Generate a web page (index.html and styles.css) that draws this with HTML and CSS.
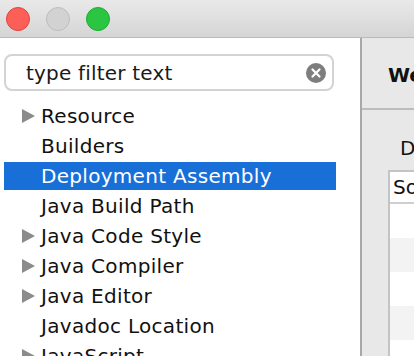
FILE: index.html
```html
<!DOCTYPE html>
<html lang="en">
<head>
    <meta charset="UTF-8">
    <title>Properties</title>
    <link rel="stylesheet" href="styles.css">
</head>
<body>
    <div class="titlebar">
        <span class="light red"></span>
        <span class="light gray"></span>
        <span class="light green"></span>
    </div>
    <div class="main">
        <div class="sidebar">
            <div class="search">
                <span class="search-text">type filter text</span>
                <svg class="clear" width="20" height="20" viewBox="0 0 20 20">
                    <circle cx="10" cy="10" r="10" fill="#7e7e7e"/>
                    <path d="M6.5 6.5 L13.5 13.5 M13.5 6.5 L6.5 13.5" stroke="#fff" stroke-width="2.2" stroke-linecap="round"/>
                </svg>
            </div>
            <ul class="tree">
                <li class="node has-children">Resource</li>
                <li class="node">Builders</li>
                <li class="node selected">Deployment Assembly</li>
                <li class="node">Java Build Path</li>
                <li class="node has-children">Java Code Style</li>
                <li class="node has-children">Java Compiler</li>
                <li class="node has-children">Java Editor</li>
                <li class="node">Javadoc Location</li>
                <li class="node has-children">JavaScript</li>
            </ul>
        </div>
        <div class="pane">
            <div class="pane-header">Web Deployment Assembly</div>
            <div class="pane-body">
                <div class="pane-desc">Define packaging structure for this Java EE Web Application project.</div>
                <div class="table">
                    <div class="table-head">Source</div>
                    <div class="table-row"></div>
                    <div class="table-row alt"></div>
                    <div class="table-row"></div>
                    <div class="table-row alt"></div>
                    <div class="table-row"></div>
                </div>
            </div>
        </div>
    </div>
</body>
</html>
```

FILE: styles.css
```css
html, body {
    margin: 0;
    height: 100%;
    overflow: hidden;
}
body {
    display: flex;
    flex-direction: column;
    font-family: 'DejaVu Sans', sans-serif;
    font-size: 20px;
    color: #111;
    background-color: #fff;
}
.titlebar {
    height: 37px;
    flex-shrink: 0;
    display: flex;
    align-items: center;
    gap: 16px;
    padding-left: 6px;
    background: linear-gradient(#e9e9e9, #d5d5d5);
    border-bottom: 1px solid #b9b9b9;
}
.light {
    width: 24px;
    height: 24px;
    border-radius: 50%;
    box-sizing: border-box;
}
.red {
    background-color: #fc5f57;
    border: 1px solid #e0443e;
}
.gray {
    background-color: #d2d2d2;
    border: 1px solid #bdbdbd;
}
.green {
    background-color: #2ac641;
    border: 1px solid #1eaa35;
}
.main {
    flex: 1;
    display: flex;
    min-height: 0;
}
.sidebar {
    width: 360px;
    flex-shrink: 0;
    border-right: 2px solid #a8a8a8;
    background-color: #fff;
    padding-top: 16px;
}
.search {
    margin-left: 4px;
    width: 330px;
    height: 37px;
    box-sizing: border-box;
    border: 2px solid #d3d3d3;
    border-radius: 8px;
    display: flex;
    align-items: center;
    justify-content: space-between;
    padding: 0 6px 0 20px;
}
.search-text {
    color: #1a1a1a;
    letter-spacing: 0.2px;
}
.tree {
    list-style: none;
    margin: 11px 0 0;
    padding: 0;
}
.node {
    position: relative;
    margin-left: 4px;
    width: 332px;
    height: 28px;
    line-height: 28px;
    margin-bottom: 2px;
    padding-left: 37px;
    box-sizing: border-box;
    white-space: nowrap;
    letter-spacing: 0.3px;
}
.has-children::before {
    content: '';
    position: absolute;
    left: 18px;
    top: 7px;
    border-left: 13px solid #8b8b8b;
    border-top: 7px solid transparent;
    border-bottom: 7px solid transparent;
}
.selected {
    background-color: #196fd8;
    color: #fff;
}
.pane {
    flex: 1;
    background-color: #e8e8e8;
    overflow: hidden;
    white-space: nowrap;
}
.pane-header {
    height: 70px;
    line-height: 74px;
    padding-left: 26px;
    font-weight: bold;
    border-bottom: 2px solid #bcbcbc;
}
.pane-body {
    padding-left: 26px;
}
.pane-desc {
    padding: 26px 0 0 12px;
    height: 32px;
    line-height: 24px;
}
.table {
    margin-top: 2px;
    border-left: 2px solid #c4c4c4;
    border-top: 2px solid #c4c4c4;
    background-color: #fff;
}
.table-head {
    height: 30px;
    line-height: 30px;
    padding-left: 3px;
    border-bottom: 2px solid #cfcfcf;
}
.table-row {
    height: 34px;
}
.table-row.alt {
    background-color: #f3f3f3;
}
```
